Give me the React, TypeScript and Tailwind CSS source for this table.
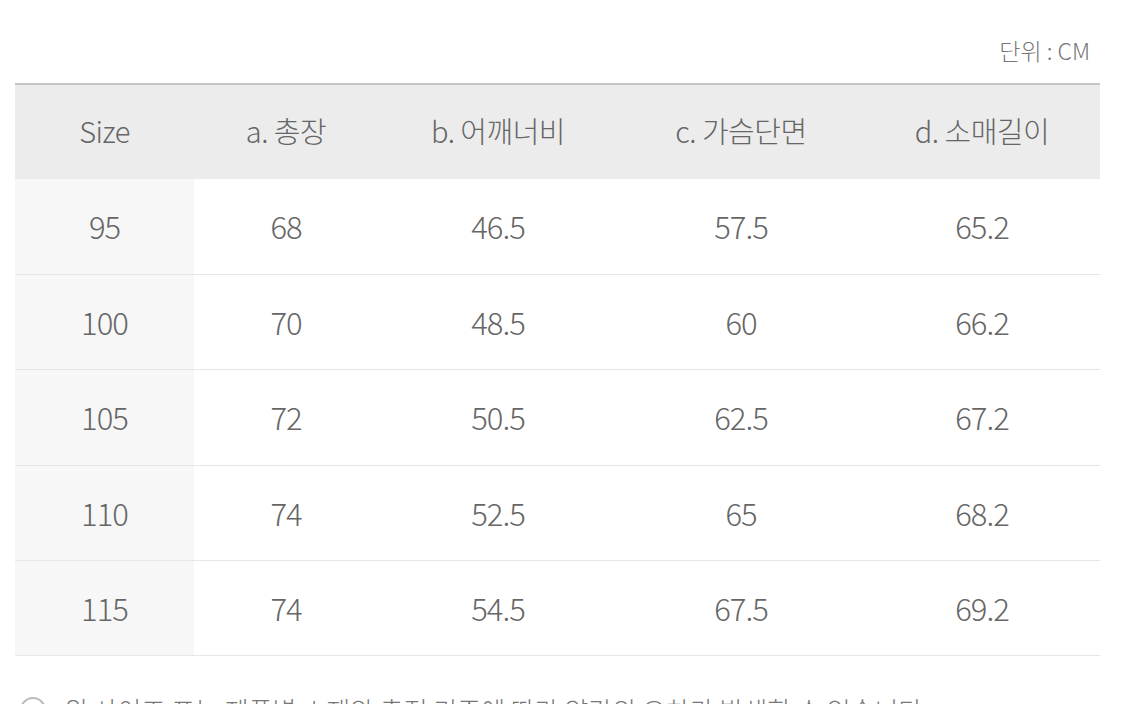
const FONT = "font-['Noto_Sans_CJK_KR','Noto_Sans',sans-serif]";

const HEADERS = ['Size', 'a. 총장', 'b. 어깨너비', 'c. 가슴단면', 'd. 소매길이'];

const ROWS: string[][] = [
  ['95', '68', '46.5', '57.5', '65.2'],
  ['100', '70', '48.5', '60', '66.2'],
  ['105', '72', '50.5', '62.5', '67.2'],
  ['110', '74', '52.5', '65', '68.2'],
  ['115', '74', '54.5', '67.5', '69.2'],
];

export default function App() {
  return (
    <div className={`${FONT} min-h-screen w-[1125px] bg-white pl-[15px] pr-[25px] font-light text-[#666]`}>
      <div className="flex h-[83px] items-end justify-end pb-[21px] pr-[10px]">
        <span className="text-[23px] leading-none tracking-[0px] text-[#777]">단위 : CM</span>
      </div>

      <table className="w-[1085px] table-fixed border-collapse border-t-2 border-[#c4c4c4]">
        <colgroup>
          <col className="w-[179px]" />
          <col className="w-[184px]" />
          <col className="w-[240px]" />
          <col className="w-[246px]" />
          <col className="w-[236px]" />
        </colgroup>
        <thead>
          <tr className="h-[95px] bg-[#ececec]">
            {HEADERS.map((h) => (
              <th key={h} className="pb-[3px] text-center text-[29px] font-light tracking-[-0.5px] text-[#666]">
                {h}
              </th>
            ))}
          </tr>
        </thead>
        <tbody>
          {ROWS.map((row) => (
            <tr key={row[0]} className="h-[95.4px] border-b border-[#e6e6e6]">
              {row.map((v, i) => (
                <td
                  key={i}
                  className={`text-center text-[31px] tracking-[-1px] text-[#666] ${i === 0 ? 'bg-[#f7f7f7]' : ''}`}
                >
                  {v}
                </td>
              ))}
            </tr>
          ))}
        </tbody>
      </table>

      <div className="mt-[34px] flex items-center gap-[18px] pl-[5px] text-[26px] tracking-[0px] text-[#777]">
        <span className="flex h-[26px] w-[26px] shrink-0 items-center justify-center rounded-full border-2 border-[#bbb] text-[15px] font-bold text-[#bbb]">!</span>
        <span className="whitespace-nowrap">위 사이즈 표는 제품별 소재와 측정 기준에 따라 약간의 오차가 발생할 수 있습니다.</span>
      </div>
    </div>
  );
}
